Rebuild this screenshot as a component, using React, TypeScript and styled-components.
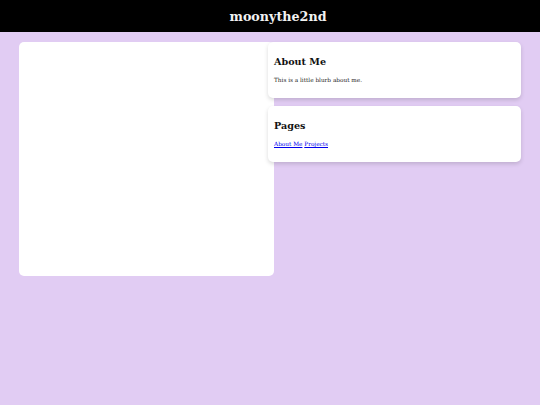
import React from "react";
import styled, { createGlobalStyle } from "styled-components";

const Global = createGlobalStyle`
  html, body { margin: 0; padding: 0; }
  body {
    background: #e1ccf3;
    font-family: "DejaVu Serif", Georgia, serif;
    color: #111;
  }
`;

const Header = styled.header`
  height: 32px;
  background: #000;
  display: flex;
  align-items: center;
  justify-content: center;
  padding-left: 16px;
`;

const Title = styled.h1`
  margin: 0;
  font-size: 12.7px;
  font-weight: bold;
  color: #f2f2f2;
`;

const Main = styled.main`
  display: flex;
  align-items: flex-start;
  padding: 10px 19px;
`;

const Content = styled.section`
  flex: 0 0 255px;
  height: 234px;
  background: #fff;
  border-radius: 5px;
`;

const Sidebar = styled.aside`
  flex: 1;
  margin-left: -6px;
  display: flex;
  flex-direction: column;
  gap: 8px;
  position: relative;
`;

const Card = styled.div<{ $height: number }>`
  background: #fff;
  border-radius: 5px;
  box-shadow: 0 2px 4px rgba(0, 0, 0, 0.15);
  height: ${(p) => p.$height}px;
  box-sizing: border-box;
  padding: 14px 6px 0;
`;

const Heading = styled.h2`
  margin: 0 0 10px;
  font-size: 9.6px;
  font-weight: bold;
  color: #111;
`;

const Text = styled.p`
  margin: 0;
  font-size: 5.75px;
  color: #222;
`;

const Link = styled.a`
  color: #0000ee;
  text-decoration: underline;
`;

export default function App() {
  return (
    <>
      <Global />
      <Header>
        <Title>moonythe2nd</Title>
      </Header>
      <Main>
        <Content />
        <Sidebar>
          <Card $height={56}>
            <Heading>About Me</Heading>
            <Text>This is a little blurb about me.</Text>
          </Card>
          <Card $height={56}>
            <Heading>Pages</Heading>
            <Text>
              <Link href="#">About Me</Link> <Link href="#">Projects</Link>
            </Text>
          </Card>
        </Sidebar>
      </Main>
    </>
  );
}
